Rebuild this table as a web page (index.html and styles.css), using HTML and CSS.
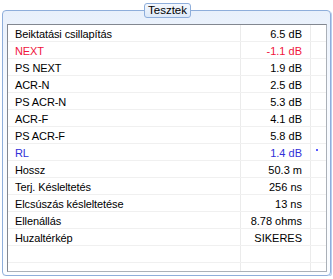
FILE: index.html
```html
<!DOCTYPE html>
<html>
<head>
<meta charset="utf-8">
<link rel="stylesheet" href="styles.css">
</head>
<body>
<div class="group">
  <div class="legend">Tesztek</div>
  <div class="list">
    <div class="row"><div class="c1">Beiktatási csillapítás</div><div class="c2">6.5 dB</div><div class="c3"></div></div>
    <div class="row red"><div class="c1">NEXT</div><div class="c2">-1.1 dB</div><div class="c3"></div></div>
    <div class="row"><div class="c1">PS NEXT</div><div class="c2">1.9 dB</div><div class="c3"></div></div>
    <div class="row"><div class="c1">ACR-N</div><div class="c2">2.5 dB</div><div class="c3"></div></div>
    <div class="row"><div class="c1">PS ACR-N</div><div class="c2">5.3 dB</div><div class="c3"></div></div>
    <div class="row"><div class="c1">ACR-F</div><div class="c2">4.1 dB</div><div class="c3"></div></div>
    <div class="row"><div class="c1">PS ACR-F</div><div class="c2">5.8 dB</div><div class="c3"></div></div>
    <div class="row blue"><div class="c1">RL</div><div class="c2">1.4 dB</div><div class="c3"><span class="dot"></span></div></div>
    <div class="row"><div class="c1">Hossz</div><div class="c2">50.3 m</div><div class="c3"></div></div>
    <div class="row"><div class="c1">Terj. Késleltetés</div><div class="c2">256 ns</div><div class="c3"></div></div>
    <div class="row"><div class="c1">Elcsúszás késleltetése</div><div class="c2">13 ns</div><div class="c3"></div></div>
    <div class="row"><div class="c1">Ellenállás</div><div class="c2">8.78 ohms</div><div class="c3"></div></div>
    <div class="row"><div class="c1">Huzaltérkép</div><div class="c2">SIKERES</div><div class="c3"></div></div>
    <div class="row"><div class="c1"></div><div class="c2"></div><div class="c3"></div></div>
    <div class="row"><div class="c1"></div><div class="c2"></div><div class="c3"></div></div>
  </div>
</div>
</body>
</html>
```
FILE: styles.css
```css
html, body {
  margin: 0;
  padding: 0;
  background: #ffffff;
}
body {
  font-family: "Liberation Sans", Arial, sans-serif;
  font-size: 11px;
  color: #000;
  padding: 10px 0 0 2px;
}
.group {
  position: relative;
  box-sizing: border-box;
  width: 329px;
  height: 266px;
  border: 1px solid #8eaedb;
  border-radius: 4px;
  box-shadow: 1px 1px 0 #b9cfee;
  background: linear-gradient(#e8f0fb, #f7faff 30%, #fbfdff);
  padding: 13px 3px 3px 4px;
}
.legend {
  position: absolute;
  top: -8px;
  left: 141px;
  height: 15px;
  box-sizing: border-box;
  padding: 0 3px;
  line-height: 13px;
  font-size: 11.5px;
  border: 1px solid #8eaedb;
  border-radius: 3px;
  background: linear-gradient(#f4f8fe, #dde9f8);
}
.list {
  box-sizing: border-box;
  width: 320px;
  height: 248px;
  border: 1px solid #aab0b8;
  border-top-color: #828790;
  border-left-color: #828790;
  background: #fff;
  overflow: hidden;
}
.row {
  display: flex;
  height: 17px;
  box-sizing: border-box;
  border-bottom: 1px solid #f0f0f0;
}
.c1, .c2, .c3 {
  box-sizing: border-box;
  padding-top: 2px;
  line-height: 14px;
  white-space: nowrap;
}
.c1 {
  width: 233px;
  padding-left: 7px;
  border-right: 1px solid #ebebeb;
  letter-spacing: -0.1px;
}
.c2 {
  width: 70px;
  text-align: right;
  padding-right: 8px;
  border-right: 1px solid #ebebeb;
}
.c3 {
  flex: 1;
  position: relative;
}
.red { color: #f0143c; }
.blue { color: #3030d8; }
.dot {
  position: absolute;
  left: 5px;
  top: 5px;
  width: 2px;
  height: 2px;
  background: #5a5aff;
}
```
